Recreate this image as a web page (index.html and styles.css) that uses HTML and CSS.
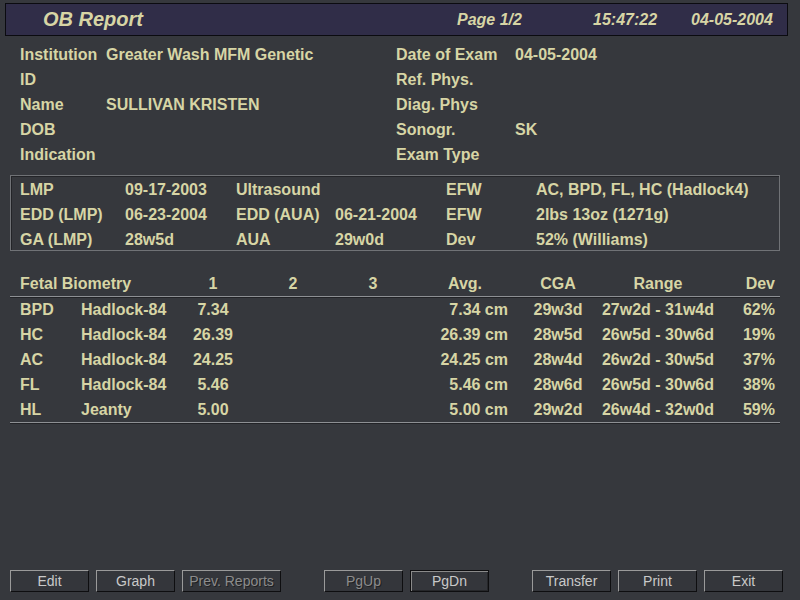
FILE: index.html
```html
<!DOCTYPE html>
<html>
<head>
<meta charset="utf-8">
<title>OB Report</title>
<link rel="stylesheet" href="styles.css">
</head>
<body>
<div class="header">
  <span class="title">OB Report</span>
  <span class="page">Page 1/2</span>
  <span class="time">15:47:22</span>
  <span class="date">04-05-2004</span>
</div>

<div class="info">
  <span>Institution</span><span>Greater Wash MFM Genetic</span><span>Date of Exam</span><span>04-05-2004</span>
  <span>ID</span><span></span><span>Ref. Phys.</span><span></span>
  <span>Name</span><span>SULLIVAN KRISTEN</span><span>Diag. Phys</span><span></span>
  <span>DOB</span><span></span><span>Sonogr.</span><span>SK</span>
  <span>Indication</span><span></span><span>Exam Type</span><span></span>
</div>

<div class="box">
  <span>LMP</span><span>09-17-2003</span><span>Ultrasound</span><span></span><span>EFW</span><span>AC, BPD, FL, HC (Hadlock4)</span>
  <span>EDD (LMP)</span><span>06-23-2004</span><span>EDD (AUA)</span><span>06-21-2004</span><span>EFW</span><span>2lbs 13oz (1271g)</span>
  <span>GA (LMP)</span><span>28w5d</span><span>AUA</span><span>29w0d</span><span>Dev</span><span>52% (Williams)</span>
</div>

<div class="bio">
  <div class="row head">
    <span class="span2">Fetal Biometry</span><span class="c">1</span><span class="c">2</span><span class="c">3</span><span class="avgh">Avg.</span><span class="c">CGA</span><span class="c">Range</span><span class="r">Dev</span>
  </div>
  <div class="rows">
    <div class="row"><span>BPD</span><span>Hadlock-84</span><span class="c">7.34</span><span></span><span></span><span class="avg">7.34 cm</span><span class="c">29w3d</span><span class="c">27w2d - 31w4d</span><span class="r">62%</span></div>
    <div class="row"><span>HC</span><span>Hadlock-84</span><span class="c">26.39</span><span></span><span></span><span class="avg">26.39 cm</span><span class="c">28w5d</span><span class="c">26w5d - 30w6d</span><span class="r">19%</span></div>
    <div class="row"><span>AC</span><span>Hadlock-84</span><span class="c">24.25</span><span></span><span></span><span class="avg">24.25 cm</span><span class="c">28w4d</span><span class="c">26w2d - 30w5d</span><span class="r">37%</span></div>
    <div class="row"><span>FL</span><span>Hadlock-84</span><span class="c">5.46</span><span></span><span></span><span class="avg">5.46 cm</span><span class="c">28w6d</span><span class="c">26w5d - 30w6d</span><span class="r">38%</span></div>
    <div class="row"><span>HL</span><span>Jeanty</span><span class="c">5.00</span><span></span><span></span><span class="avg">5.00 cm</span><span class="c">29w2d</span><span class="c">26w4d - 32w0d</span><span class="r">59%</span></div>
  </div>
</div>

<div class="footer">
  <div class="btn">Edit</div>
  <div class="btn">Graph</div>
  <div class="btn wide disabled">Prev. Reports</div>
  <div class="btn gap disabled">PgUp</div>
  <div class="btn focus">PgDn</div>
  <div class="btn gap">Transfer</div>
  <div class="btn">Print</div>
  <div class="btn">Exit</div>
</div>
</body>
</html>
```

FILE: styles.css
```css
html, body {
  margin: 0;
  padding: 0;
}
body {
  width: 800px;
  height: 600px;
  background: #36383d;
  font-family: "Liberation Sans", Arial, sans-serif;
  font-weight: bold;
  font-size: 16px;
  color: #d7d5a5;
  display: flex;
  flex-direction: column;
  overflow: hidden;
}

.header {
  margin: 3px 12px 0 5px;
  height: 31px;
  border: 1px solid #0b0b10;
  background: #302d48;
  display: flex;
  align-items: center;
  font-style: italic;
  white-space: nowrap;
}
.title {
  font-size: 20px;
  margin-left: 37px;
  flex: 0 0 414px;
}
.page {
  flex: 0 0 136px;
}
.time {
  flex: 0 0 98px;
}
.date {
  flex: 0 0 auto;
}

.info {
  margin-top: 6px;
  padding-left: 20px;
  display: grid;
  grid-template-columns: 86px 290px 119px 1fr;
  grid-auto-rows: 25px;
  line-height: 25px;
  white-space: nowrap;
}

.box {
  margin: 8px 0 0 10px;
  width: 770px;
  height: 76px;
  box-sizing: border-box;
  border: 1px solid #707276;
  box-shadow: inset 1px 1px 0 #232428;
  padding-left: 9px;
  padding-top: 1px;
  display: grid;
  grid-template-columns: 105px 111px 99px 111px 90px 1fr;
  grid-auto-rows: 25px;
  line-height: 25px;
  white-space: nowrap;
}

.bio {
  margin: 21px 0 0 10px;
  width: 770px;
}
.row {
  display: grid;
  grid-template-columns: 61px 92px 80px 80px 80px 105px 80px 120px 57px;
  padding-left: 10px;
  height: 25px;
  line-height: 25px;
  white-space: nowrap;
}
.head {
  height: 24px;
  line-height: 24px;
  border-bottom: 1px solid #8e9094;
  box-shadow: 0 1px 0 #222327;
}
.rows {
  border-bottom: 1px solid #8e9094;
  box-shadow: 0 1px 0 #222327;
}
.span2 {
  grid-column: span 2;
}
.c {
  text-align: center;
}
.r {
  text-align: right;
}
.avg {
  text-align: right;
  padding-right: 10px;
}
.avgh {
  text-align: right;
  padding-right: 36px;
}

.footer {
  margin-top: auto;
  margin-bottom: 8px;
  padding-left: 10px;
  display: flex;
}
.btn {
  width: 79px;
  height: 22px;
  box-sizing: border-box;
  margin-right: 7px;
  border-top: 1px solid #9a9a9a;
  border-left: 1px solid #9a9a9a;
  border-right: 1px solid #0e0e10;
  border-bottom: 1px solid #0e0e10;
  background: #34363b;
  color: #c9c9c9;
  font-weight: normal;
  font-size: 14px;
  line-height: 20px;
  text-align: center;
  white-space: nowrap;
}
.btn.wide {
  width: 99px;
}
.btn.gap {
  margin-left: 36px;
}
.btn.disabled {
  color: #8c8c8c;
  text-shadow: 1px 1px 0 #1e1f22;
}
.btn.focus {
  border: 1px solid #0e0e10;
  box-shadow: inset 1px 1px 0 #8a8a8a, inset -1px -1px 0 #26272a;
}
```
